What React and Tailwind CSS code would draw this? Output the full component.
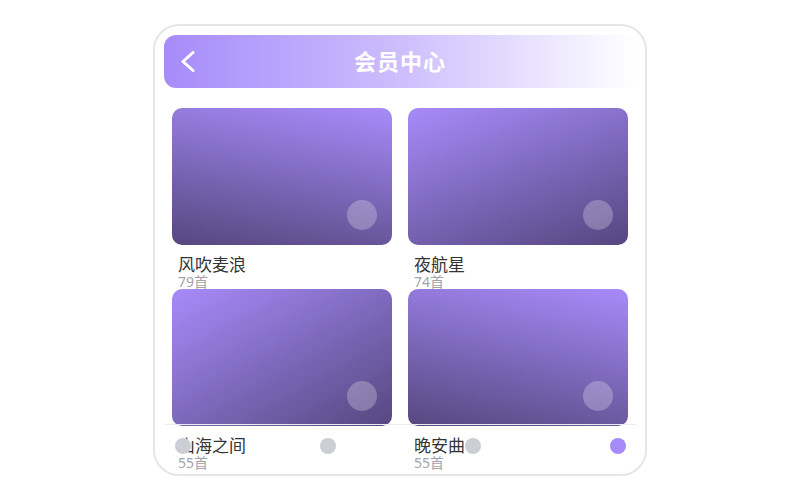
import React from "react";

const playlists = [
  { id: 1, title: "风吹麦浪", count: 79, bg: "bg-[linear-gradient(190deg,#a78bfa,#57477f)]" },
  { id: 2, title: "夜航星", count: 74, bg: "bg-[linear-gradient(160deg,#a78bfa,#56467f)]" },
  { id: 3, title: "山海之间", count: 55, bg: "bg-[linear-gradient(150deg,#a78bfa,#57477f)]" },
  { id: 4, title: "晚安曲", count: 55, bg: "bg-[linear-gradient(192deg,#a78bfa,#57477f)]" },
];

const tabs = [false, false, false, true];

const App = () => {
  return (
    <div
      className="w-[800px] h-[500px] bg-white flex items-center justify-center"
      style={{ fontFamily: '"Noto Sans", "Noto Sans CJK SC", sans-serif' }}
    >
      {/* Phone frame */}
      <div className="relative w-[494px] h-[452px] rounded-[26px] border-2 border-[#e6e6ea] bg-white overflow-hidden px-[9px] pt-[9px]">
        {/* Header */}
        <div className="relative h-[53px] rounded-xl bg-gradient-to-r from-[#a78bfa] via-[#cdbefc] to-white flex items-center justify-center">
          <svg
            className="absolute left-[17px] top-[16px]"
            width="14"
            height="21"
            viewBox="0 0 14 21"
            fill="none"
          >
            <polyline
              points="12,1.5 2,10.5 12,19.5"
              stroke="white"
              strokeWidth="3"
              strokeLinecap="round"
              strokeLinejoin="round"
            />
          </svg>
          <h1 className="text-white text-[22px] font-bold tracking-[1px]">会员中心</h1>
        </div>

        {/* Playlist grid */}
        <div className="px-2 pt-5 grid grid-cols-2 gap-x-4 gap-y-4">
          {playlists.map((item) => (
            <div key={item.id} className="h-[165px]">
              <div className={`relative h-[137px] rounded-[10px] ${item.bg}`}>
                <div className="absolute right-[15px] bottom-[15px] w-[30px] h-[30px] rounded-full bg-white/25" />
              </div>
              <div className="px-1.5 pt-[10px]">
                <p className="text-[17px] leading-[19px] text-[#333]">{item.title}</p>
                <p className="text-[14px] leading-[15px] text-[#a3a3ab]">{item.count}首</p>
              </div>
            </div>
          ))}
        </div>

        {/* Tab bar */}
        <div className="absolute left-[10px] right-[9px] bottom-0 h-[50px] border-t border-[#ececf0] flex justify-between items-start pt-[13px] px-[10px]">
          {tabs.map((active, i) => (
            <span
              key={i}
              className={`w-4 h-4 rounded-full ${active ? "bg-[#a78bfa]" : "bg-[#cbcfd5]"}`}
            />
          ))}
        </div>
      </div>
    </div>
  );
};

export default App;
